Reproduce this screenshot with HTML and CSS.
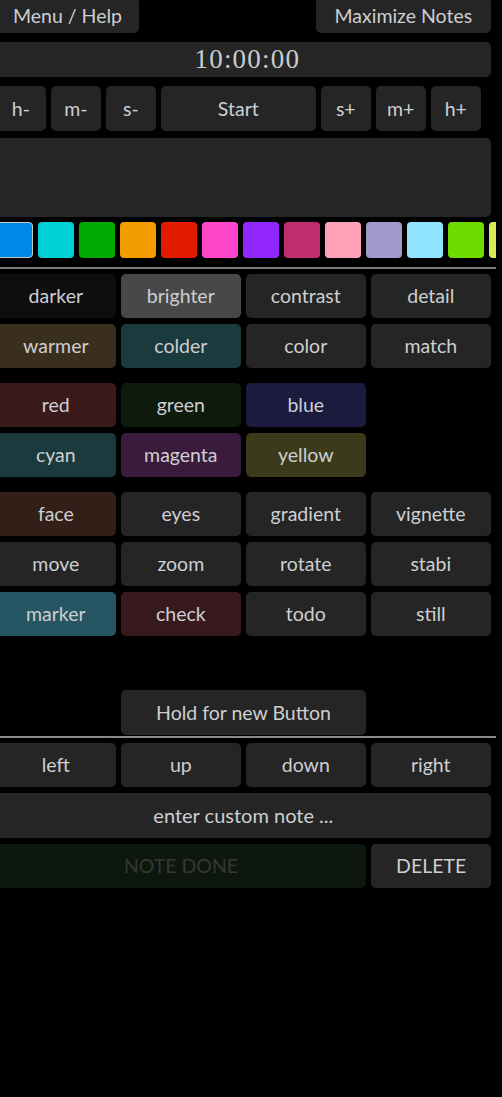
FILE: index.html
```html
<!DOCTYPE html>
<html>
<head>
<meta charset="utf-8">
<link rel="stylesheet" href="styles.css">
</head>
<body>
<div class="app">
  <div class="top-row">
    <button class="btn menu">Menu / Help</button>
    <button class="btn maxi">Maximize Notes</button>
  </div>
  <div class="time">10:00:00</div>
  <div class="timer-row">
    <button class="btn sm">h-</button>
    <button class="btn sm">m-</button>
    <button class="btn sm">s-</button>
    <button class="btn start">Start</button>
    <button class="btn sm">s+</button>
    <button class="btn sm">m+</button>
    <button class="btn sm">h+</button>
  </div>
  <div class="note"></div>
  <div class="swatches">
    <span class="sw sel" style="background:#0088e8"></span>
    <span class="sw" style="background:#00d0d3"></span>
    <span class="sw" style="background:#00aa00"></span>
    <span class="sw" style="background:#f39c00"></span>
    <span class="sw" style="background:#e31a00"></span>
    <span class="sw" style="background:#ff46cb"></span>
    <span class="sw" style="background:#9226ff"></span>
    <span class="sw" style="background:#c22d6e"></span>
    <span class="sw" style="background:#ffa2b8"></span>
    <span class="sw" style="background:#a398cc"></span>
    <span class="sw" style="background:#90e4ff"></span>
    <span class="sw" style="background:#6fdb00"></span>
    <span class="sw" style="background:#dde855"></span>
  </div>
  <hr class="rule">
  <div class="grid first">
    <button class="btn c-darker">darker</button>
    <button class="btn c-brighter">brighter</button>
    <button class="btn">contrast</button>
    <button class="btn">detail</button>
    <button class="btn c-warm">warmer</button>
    <button class="btn c-cold">colder</button>
    <button class="btn">color</button>
    <button class="btn">match</button>
  </div>
  <div class="grid group">
    <button class="btn c-red">red</button>
    <button class="btn c-green">green</button>
    <button class="btn c-blue">blue</button>
    <span></span>
    <button class="btn c-cold">cyan</button>
    <button class="btn c-mag">magenta</button>
    <button class="btn c-yel">yellow</button>
  </div>
  <div class="grid group">
    <button class="btn c-face">face</button>
    <button class="btn">eyes</button>
    <button class="btn">gradient</button>
    <button class="btn">vignette</button>
    <button class="btn">move</button>
    <button class="btn">zoom</button>
    <button class="btn">rotate</button>
    <button class="btn">stabi</button>
    <button class="btn c-marker">marker</button>
    <button class="btn c-check">check</button>
    <button class="btn">todo</button>
    <button class="btn">still</button>
  </div>
  <div class="hold-row">
    <button class="btn hold">Hold for new Button</button>
  </div>
  <hr class="rule thin">
  <div class="grid dirs">
    <button class="btn">left</button>
    <button class="btn">up</button>
    <button class="btn">down</button>
    <button class="btn">right</button>
  </div>
  <button class="btn custom">enter custom note ...</button>
  <div class="done-row">
    <button class="btn done">NOTE DONE</button>
    <button class="btn">DELETE</button>
  </div>
</div>
</body>
</html>
```

FILE: styles.css
```css
html, body {
  margin: 0;
  padding: 0;
  background: #000;
  overflow: hidden;
}
.app {
  width: 500px;
  margin-left: -4px;
  font-family: Lato, "Noto Sans", sans-serif;
}
.btn {
  display: block;
  box-sizing: border-box;
  height: 44.67px;
  border: none;
  border-radius: 5px;
  background: #252525;
  color: #cdcfd2;
  font-family: Lato, "Noto Sans", sans-serif;
  font-size: 19.5px;
  padding: 0;
  text-align: center;
}
.top-row {
  display: flex;
  justify-content: space-between;
  width: 494.67px;
  margin-top: -3px;
}
.top-row .btn {
  height: 35.67px;
  padding-top: 1px;
}
.menu { width: 143px; }
.maxi { width: 174.67px; }
.time {
  box-sizing: border-box;
  width: 494.67px;
  height: 34.67px;
  margin-top: 9.33px;
  border-radius: 5px;
  background: #252525;
  color: #c9cdd2;
  font-family: "Liberation Serif", serif;
  font-size: 27px;
  letter-spacing: 1.2px;
  display: flex;
  align-items: center;
  justify-content: center;
  padding-left: 8px;
}
.timer-row {
  display: flex;
  gap: 5.33px;
  margin-top: 9.33px;
}
.timer-row .sm { width: 49.67px; }
.timer-row .start { width: 154.67px; }
.note {
  width: 494.67px;
  height: 78.33px;
  margin-top: 7.67px;
  border-radius: 5px;
  background: #252525;
}
.swatches {
  display: flex;
  gap: 5px;
  width: 500px;
  overflow: hidden;
  margin-top: 5.33px;
}
.sw {
  flex: none;
  box-sizing: border-box;
  width: 36px;
  height: 35.67px;
  border-radius: 4px;
}
.sw.sel {
  width: 36.67px;
  border: 1.5px solid #c8c8c8;
}
.rule {
  border: none;
  height: 2px;
  background: #7a7a7a;
  margin: 9px 0 0 0;
  width: 500px;
}
.rule.thin {
  height: 1.5px;
  margin-top: 1px;
  background: #8a8a8a;
}
.grid {
  display: grid;
  grid-template-columns: repeat(4, 119.67px);
  gap: 5.33px;
  margin-top: 5.33px;
}
.grid.first {
  margin-top: 5px;
}
.grid.group {
  margin-top: 14.33px;
}
.grid.dirs {
  margin-top: 5px;
}
.hold-row {
  display: flex;
  justify-content: center;
  width: 495px;
  margin-top: 54.33px;
}
.hold {
  width: 245.33px;
}
.custom {
  width: 494.67px;
  height: 45.67px;
  margin-top: 5.33px;
  font-size: 20px;
}
.done-row {
  display: flex;
  gap: 5.33px;
  margin-top: 5.33px;
}
.done-row .btn { width: 119.67px; }
.done-row .done {
  width: 370px;
  background: #0d170d;
  color: #343834;
}
.c-darker { background: #0e0e0e; }
.c-brighter { background: #484848; }
.c-warm { background: #3a2e1c; }
.c-cold { background: #1b3a3d; }
.c-red { background: #3a1a1a; }
.c-green { background: #0e1a0e; }
.c-blue { background: #1b1b40; }
.c-mag { background: #3b1b3b; }
.c-yel { background: #3b3b1b; }
.c-face { background: #321f17; }
.c-marker { background: #265563; }
.c-check { background: #381a1e; }
```
